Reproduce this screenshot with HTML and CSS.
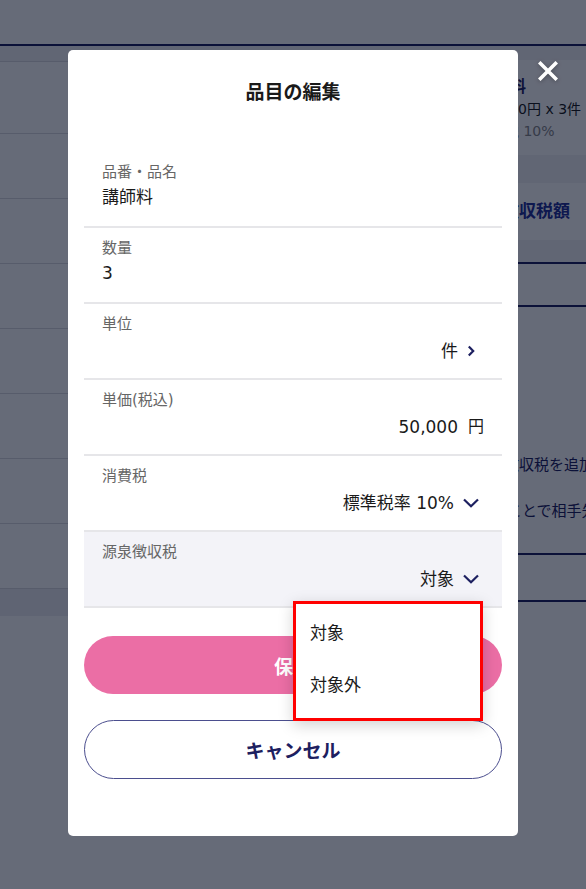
FILE: index.html
```html
<!DOCTYPE html>
<html lang="ja">
<head>
    <meta charset="UTF-8">
    <title>品目の編集</title>
    <link rel="stylesheet" href="styles.css">
</head>
<body>
<div class="page">
    <header class="page-header"></header>
    <div class="page-body">
        <ul class="doc-list">
            <li class="doc-top"></li>
            <li class="doc-row doc-row-first"></li>
            <li class="doc-row"></li>
            <li class="doc-row"></li>
            <li class="doc-row"></li>
            <li class="doc-row"></li>
            <li class="doc-row"></li>
            <li class="doc-row"></li>
            <li class="doc-row"></li>
            <li class="doc-foot"></li>
        </ul>
        <div class="detail">
            <div class="detail-gap detail-gap-top"></div>
            <div class="detail-item">
                <p class="detail-name">講師料</p>
                <p class="detail-price">50,000円 x 3件</p>
                <p class="detail-tax">消費税 10%</p>
            </div>
            <div class="detail-gap detail-gap-mid"></div>
            <div class="detail-link">源泉徴収税額</div>
            <div class="detail-gap detail-gap-low"></div>
            <div class="detail-block detail-block-short"></div>
            <div class="detail-block detail-note">
                <p class="note-line note-line-first">源泉徴収税を追加</p>
                <p class="note-line note-line-second">することで相手先</p>
            </div>
            <div class="detail-block detail-block-end"></div>
        </div>
    </div>
</div>

<div class="overlay">
    <div class="modal">
        <button class="modal-close" type="button" aria-label="閉じる">
            <svg width="20" height="20" viewBox="0 0 20 20">
                <path d="M2.5 2.5 L17.5 17.5 M17.5 2.5 L2.5 17.5" stroke="#fff" stroke-width="3.6" stroke-linecap="square" fill="none"/>
            </svg>
        </button>

        <h2 class="modal-title">品目の編集</h2>

        <div class="fields">
            <div class="field">
                <div class="field-label">品番・品名</div>
                <div class="field-value">講師料</div>
            </div>
            <div class="field">
                <div class="field-label">数量</div>
                <div class="field-value">3</div>
            </div>
            <div class="field">
                <div class="field-label">単位</div>
                <div class="field-value field-value-right">
                    <span>件</span>
                    <span class="field-suffix">
                        <svg width="8" height="12" viewBox="0 0 8 12">
                            <path d="M1.8 1.5 L6.2 6 L1.8 10.5" stroke="#1d2060" stroke-width="2.2" fill="none"/>
                        </svg>
                    </span>
                </div>
            </div>
            <div class="field">
                <div class="field-label">単価(税込)</div>
                <div class="field-value field-value-right">
                    <span>50,000</span>
                    <span class="field-suffix field-suffix-unit">円</span>
                </div>
            </div>
            <div class="field">
                <div class="field-label">消費税</div>
                <div class="field-value field-value-right">
                    <span>標準税率 10%</span>
                    <span class="field-suffix field-suffix-select">
                        <svg width="16" height="10" viewBox="0 0 16 10">
                            <path d="M1 1.5 L8 8.3 L15 1.5" stroke="#1d2060" stroke-width="2.2" fill="none"/>
                        </svg>
                    </span>
                </div>
            </div>
            <div class="field field-active">
                <div class="field-label">源泉徴収税</div>
                <div class="field-value field-value-right">
                    <span>対象</span>
                    <span class="field-suffix field-suffix-select">
                        <svg width="16" height="10" viewBox="0 0 16 10">
                            <path d="M1 1.5 L8 8.3 L15 1.5" stroke="#1d2060" stroke-width="2.2" fill="none"/>
                        </svg>
                    </span>
                </div>
            </div>
        </div>

        <div class="actions">
            <button class="btn btn-save" type="button">保存</button>
            <button class="btn btn-cancel" type="button">キャンセル</button>
        </div>

        <ul class="dropdown">
            <li class="dropdown-item">対象</li>
            <li class="dropdown-item">対象外</li>
        </ul>
    </div>
</div>
</body>
</html>
```

FILE: styles.css
```css
* {
    box-sizing: border-box;
}

html, body {
    margin: 0;
    height: 100%;
}

body {
    font-family: "DejaVu Sans", "Noto Sans CJK JP", sans-serif;
    color: #1a1a1a;
    background: #fff;
    overflow: hidden;
}

p {
    margin: 0;
}

ul {
    margin: 0;
    padding: 0;
    list-style: none;
}

/* 背景のページ */
.page {
    height: 100vh;
}

.page-header {
    height: 46px;
    border-bottom: 2px solid #1d2060;
}

.page-body {
    display: grid;
    grid-template-columns: 1fr 128px;
}

.doc-top {
    height: 16px;
    background: #f2f2f5;
    border-bottom: 1px solid #d9d9df;
}

.doc-row {
    height: 65px;
    border-bottom: 1px solid #d9d9df;
}

.doc-row-first {
    height: 72px;
}

.doc-foot {
    height: 27px;
    background: #eeeef2;
}

.detail-gap {
    background: #f2f2f5;
}

.detail-gap-top {
    height: 14px;
}

.detail-gap-mid {
    height: 28px;
}

.detail-gap-low {
    height: 22px;
}

.detail-item {
    height: 95px;
    padding: 16px 0 0 20px;
    white-space: nowrap;
    font-size: 14px;
    line-height: 22px;
}

.detail-name {
    font-size: 16px;
    font-weight: bold;
    color: #1d2060;
}

.detail-tax {
    margin-left: -1px;
    color: #888;
}

.detail-link {
    height: 57px;
    padding-left: 10px;
    line-height: 57px;
    font-size: 17px;
    font-weight: bold;
    color: #24309a;
    white-space: nowrap;
}

.detail-block {
    border-top: 2px solid #1d2060;
}

.detail-block-short {
    height: 43px;
}

.detail-note {
    height: 248px;
    padding-top: 146px;
    font-size: 15px;
    line-height: 24px;
    color: #1d2060;
    white-space: nowrap;
}

.note-line-first {
    padding-left: 16px;
}

.note-line-second {
    margin-top: 22px;
    padding-left: 19px;
}

.detail-block-end {
    height: 49px;
    border-bottom: 2px solid #1d2060;
}

/* モーダル */
.overlay {
    position: fixed;
    inset: 0;
    display: flex;
    justify-content: center;
    align-items: flex-start;
    padding-top: 50px;
    background: rgba(0, 8, 30, 0.6);
}

.modal {
    position: relative;
    width: 450px;
    height: 786px;
    padding: 0 16px;
    background: #fff;
    border-radius: 5px;
}

.modal-close {
    position: absolute;
    top: 11px;
    right: -40px;
    width: 20px;
    height: 20px;
    padding: 0;
    border: none;
    background: none;
    filter: drop-shadow(0 1px 2px rgba(0, 0, 0, 0.3));
}

.modal-close svg {
    display: block;
}

.modal-title {
    margin: 0 0 48px;
    padding-top: 30px;
    font-size: 19px;
    line-height: 24px;
    font-weight: bold;
    text-align: center;
}

.field {
    height: 76px;
    padding: 10px 18px 0;
    border-bottom: 2px solid #e6e6e9;
}

.field-active {
    background: #f3f3f8;
}

.field-label {
    font-size: 15px;
    line-height: 20px;
    color: #666;
}

.field-value {
    font-size: 17px;
    line-height: 30px;
}

.field-value-right {
    display: flex;
    justify-content: flex-end;
    align-items: center;
    margin-top: 2px;
}

.field-suffix {
    display: flex;
    justify-content: center;
    align-items: center;
    width: 26px;
}

.field-suffix svg {
    display: block;
}

.field-suffix-select {
    margin-left: 4px;
}

.field-suffix-unit {
    justify-content: flex-end;
    font-size: 16px;
}

.actions {
    display: flex;
    flex-direction: column;
    gap: 26px;
    padding-top: 28px;
}

.btn {
    display: flex;
    align-items: center;
    justify-content: center;
    height: 58px;
    border-radius: 30px;
    font-family: inherit;
    font-size: 19px;
    font-weight: bold;
}

.btn-save {
    border: none;
    background: #eb6ea5;
    color: #fff;
}

.btn-cancel {
    height: 59px;
    border: 1.5px solid #4b4e8e;
    background: #fff;
    color: #1d2060;
}

.dropdown {
    position: absolute;
    top: 551px;
    left: 225px;
    width: 190px;
    height: 120px;
    padding: 3px 0 0 14px;
    background: #fff;
    border: 3px solid #f00;
    box-shadow: 0 4px 14px rgba(0, 0, 0, 0.18);
}

.dropdown-item {
    height: 52px;
    line-height: 52px;
    font-size: 17px;
}
```
